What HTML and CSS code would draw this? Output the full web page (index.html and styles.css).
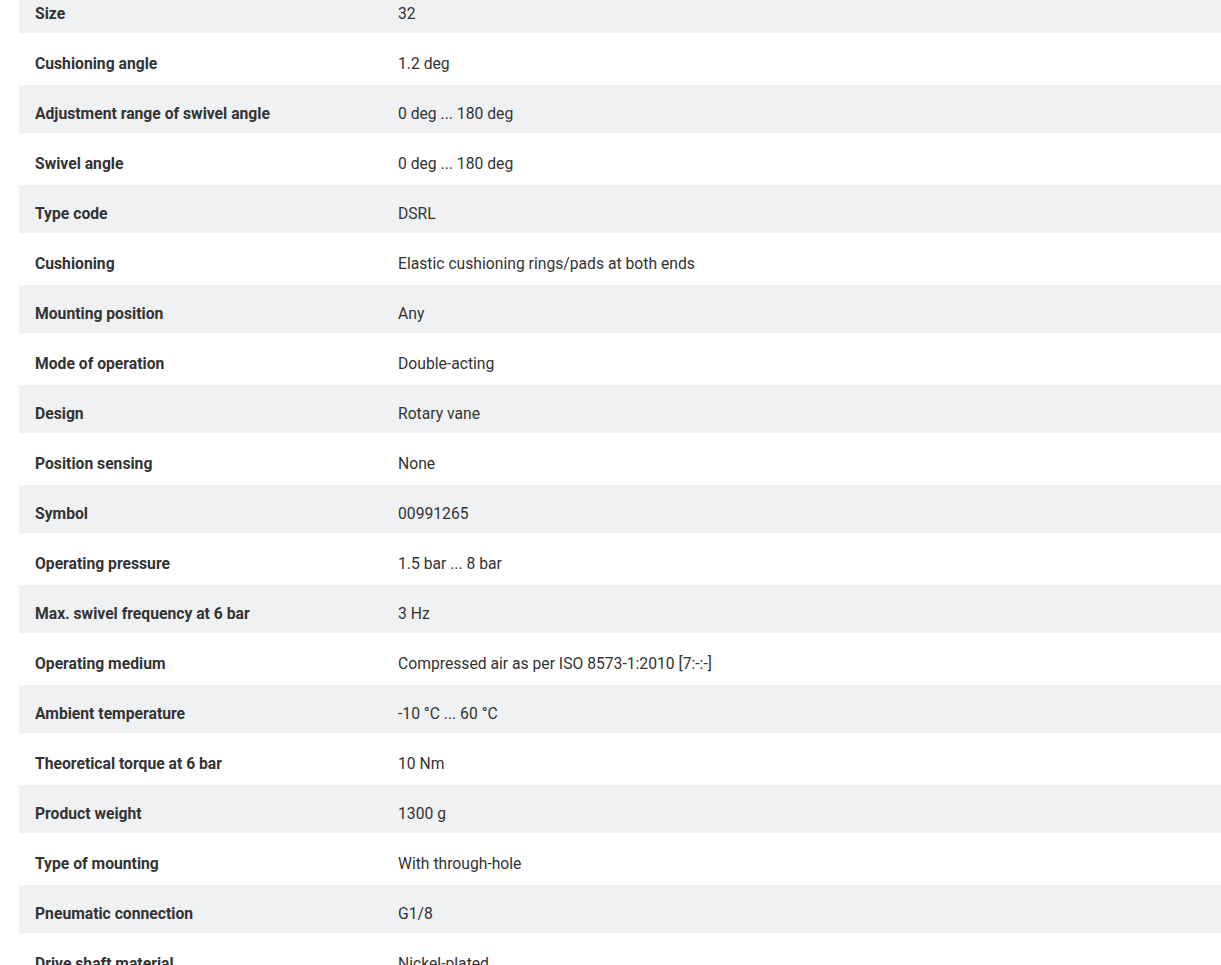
FILE: index.html
```html
<!DOCTYPE html>
<html lang="en">
<head>
<meta charset="utf-8">
<title>Technical data</title>
<link rel="stylesheet" href="styles.css">
</head>
<body>
<div class="page">
  <div class="specs">
    <div class="row"><div class="label">Size</div><div class="value">32</div></div>
    <div class="row"><div class="label">Cushioning angle</div><div class="value">1.2 deg</div></div>
    <div class="row"><div class="label">Adjustment range of swivel angle</div><div class="value">0 deg ... 180 deg</div></div>
    <div class="row"><div class="label">Swivel angle</div><div class="value">0 deg ... 180 deg</div></div>
    <div class="row"><div class="label">Type code</div><div class="value">DSRL</div></div>
    <div class="row"><div class="label">Cushioning</div><div class="value">Elastic cushioning rings/pads at both ends</div></div>
    <div class="row"><div class="label">Mounting position</div><div class="value">Any</div></div>
    <div class="row"><div class="label">Mode of operation</div><div class="value">Double-acting</div></div>
    <div class="row"><div class="label">Design</div><div class="value">Rotary vane</div></div>
    <div class="row"><div class="label">Position sensing</div><div class="value">None</div></div>
    <div class="row"><div class="label">Symbol</div><div class="value">00991265</div></div>
    <div class="row"><div class="label">Operating pressure</div><div class="value">1.5 bar ... 8 bar</div></div>
    <div class="row"><div class="label">Max. swivel frequency at 6 bar</div><div class="value">3 Hz</div></div>
    <div class="row"><div class="label">Operating medium</div><div class="value">Compressed air as per ISO 8573-1:2010 [7:-:-]</div></div>
    <div class="row"><div class="label">Ambient temperature</div><div class="value">-10 °C ... 60 °C</div></div>
    <div class="row"><div class="label">Theoretical torque at 6 bar</div><div class="value">10 Nm</div></div>
    <div class="row"><div class="label">Product weight</div><div class="value">1300 g</div></div>
    <div class="row"><div class="label">Type of mounting</div><div class="value">With through-hole</div></div>
    <div class="row"><div class="label">Pneumatic connection</div><div class="value">G1/8</div></div>
    <div class="row"><div class="label">Drive shaft material</div><div class="value">Nickel-plated</div></div>
  </div>
</div>
</body>
</html>
```

FILE: styles.css
```css
html, body {
  margin: 0;
  padding: 0;
  background: #ffffff;
  overflow: hidden;
}
.page {
  padding-left: 19px;
  margin-top: -15px;
  font-family: "Roboto", "Liberation Sans", sans-serif;
  font-size: 15.7px;
  color: #333333;
}
.specs {
  display: flex;
  flex-direction: column;
  gap: 2px;
}
.row {
  display: grid;
  grid-template-columns: 363px 1fr;
  height: 48px;
  align-items: center;
}
.row:nth-child(odd) {
  background: #f0f1f3;
}
.label {
  padding-left: 16px;
  font-weight: 700;
  padding-top: 8px;
}
.value {
  padding-left: 16px;
  padding-top: 8px;
}
```
